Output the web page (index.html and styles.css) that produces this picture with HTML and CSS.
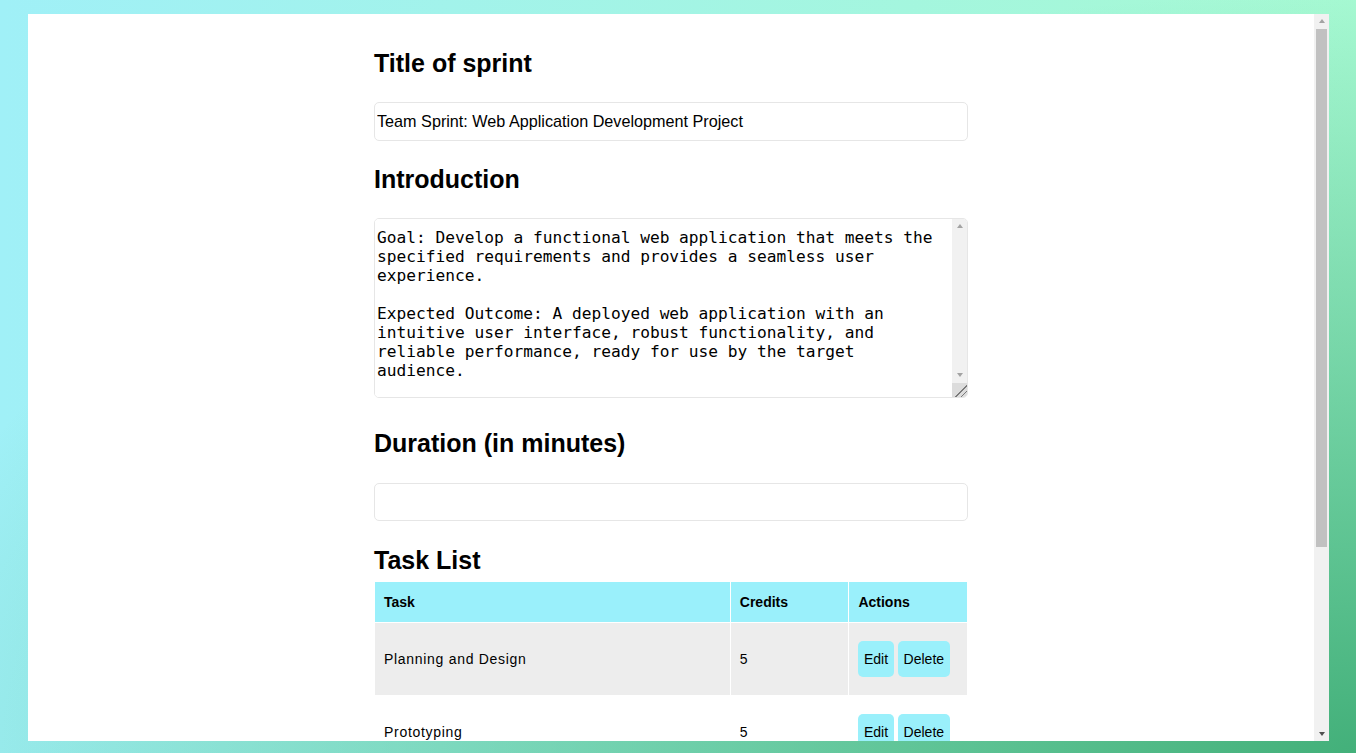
FILE: index.html
```html
<!DOCTYPE html>
<html lang="en">
<head>
<meta charset="utf-8">
<title>Sprint</title>
<link rel="stylesheet" href="styles.css">
</head>
<body>
<div class="panel">
  <div class="scroller">
    <div class="container">
      <h2>Title of sprint</h2>
      <input class="field" type="text" value="Team Sprint: Web Application Development Project">
      <h2>Introduction</h2>
      <div class="area-box">
        <textarea class="area">Goal: Develop a functional web application that meets the specified requirements and provides a seamless user experience.

Expected Outcome: A deployed web application with an intuitive user interface, robust functionality, and reliable performance, ready for use by the target audience.</textarea>
        <div class="vbar vbar-small">
          <div class="sb-btn up"></div>
          <div class="sb-track"></div>
          <div class="sb-btn down light"></div>
          <div class="sb-corner"></div>
        </div>
      </div>
      <h2 class="duration-title">Duration (in minutes)</h2>
      <input class="field" type="text" value="">
      <h2 class="list-title">Task List</h2>
      <table class="tasks">
        <thead>
          <tr><th class="c-task">Task</th><th class="c-credits">Credits</th><th class="c-actions">Actions</th></tr>
        </thead>
        <tbody>
          <tr><td>Planning and Design</td><td>5</td><td><button class="btn">Edit</button> <button class="btn">Delete</button></td></tr>
          <tr><td>Prototyping</td><td>5</td><td><button class="btn">Edit</button> <button class="btn">Delete</button></td></tr>
          <tr><td>Development</td><td>10</td><td><button class="btn">Edit</button> <button class="btn">Delete</button></td></tr>
          <tr><td>Testing</td><td>5</td><td><button class="btn">Edit</button> <button class="btn">Delete</button></td></tr>
          <tr><td>Deployment</td><td>3</td><td><button class="btn">Edit</button> <button class="btn">Delete</button></td></tr>
        </tbody>
      </table>
    </div>
  </div>
  <div class="vbar vbar-page">
    <div class="sb-btn up"></div>
    <div class="sb-track"><div class="sb-thumb"></div></div>
    <div class="sb-btn down"></div>
  </div>
</div>
</body>
</html>
```
FILE: styles.css
```css
html, body {
  margin: 0;
  padding: 0;
  height: 100%;
}
body {
  overflow: hidden;
  font-family: "Liberation Sans", Arial, sans-serif;
  color: #000;
  background:
    radial-gradient(ellipse 1500px 760px at 100% 100%, rgba(67,176,122,1) 0%, rgba(67,176,122,0) 100%),
    linear-gradient(90deg, #a0f0f7 0%, #a6f9d2 100%);
}
.panel {
  display: flex;
  margin: 14px 27px 0 28px;
  height: 727px;
  background: #fff;
}
.scroller {
  flex: 1;
  min-width: 0;
  overflow: hidden;
  padding: 10px 15px;
}
.container {
  width: 594px;
  margin: 0 auto;
}
h2 {
  font-size: 25px;
  font-weight: bold;
  margin: 24.6px 0;
}
.list-title {
  margin-bottom: 5.8px;
}
.field {
  display: block;
  box-sizing: border-box;
  width: 100%;
  height: 38.4px;
  margin: 0;
  padding: 0 2px;
  border: 1px solid #e6e6e6;
  border-radius: 5px;
  font-family: "Liberation Sans", Arial, sans-serif;
  font-size: 16.2px;
  color: #000;
  outline: none;
}
.area-box {
  display: flex;
  height: 180px;
  box-sizing: border-box;
  border: 1px solid #e6e6e6;
  border-radius: 5px;
  overflow: hidden;
  margin: -0.8px 0 31.4px;
}
.area {
  flex: 1;
  min-width: 0;
  box-sizing: border-box;
  margin: 0;
  padding: 9px 2px;
  border: none;
  font-family: "DejaVu Sans Mono", monospace;
  font-size: 16.2px;
  line-height: 19px;
  color: #000;
  overflow: hidden;
  resize: none;
  outline: none;
}

/* fake classic scrollbars */
.vbar {
  width: 15px;
  flex: 0 0 15px;
  background: #f1f1f1;
  display: flex;
  flex-direction: column;
}
.sb-btn {
  height: 15px;
  flex: 0 0 15px;
  display: flex;
  align-items: center;
  justify-content: center;
}
.sb-btn.up::before {
  content: "";
  width: 0;
  height: 0;
  border-left: 3.5px solid transparent;
  border-right: 3.5px solid transparent;
  border-bottom: 4px solid #a3a3a3;
  margin-top: -1px;
}
.sb-btn.down::before {
  content: "";
  width: 0;
  height: 0;
  border-left: 3.5px solid transparent;
  border-right: 3.5px solid transparent;
  border-top: 4px solid #505050;
}
.sb-btn.down.light::before {
  border-top-color: #a3a3a3;
}
.sb-track {
  flex: 1;
}
.sb-thumb {
  height: 518px;
  margin: 0 2px;
  background: #c1c1c1;
}
.sb-corner {
  height: 14px;
  flex: 0 0 14px;
  background-color: #dcdcdc;
  background-image: linear-gradient(135deg,
    transparent 58%, #7a7a7a 58%, #7a7a7a 64%, transparent 64%,
    transparent 76%, #7a7a7a 76%, #7a7a7a 82%, transparent 82%);
}

.tasks {
  width: 100%;
  border-collapse: collapse;
  font-size: 14px;
}
.tasks th,
.tasks td {
  border: 1px solid #fff;
  text-align: left;
}
.tasks th {
  background: #9af0fb;
  padding: 12px 9px;
  font-weight: bold;
}
.tasks td {
  padding: 18px 9px;
  letter-spacing: 0.7px;
}
.tasks tbody tr:nth-child(odd) td {
  background: #ededed;
}
.c-task { width: 60%; }
.c-credits { width: 20%; }
.c-actions { width: 20%; }
.btn {
  background: #9af0fb;
  border: none;
  border-radius: 5px;
  padding: 10px 5.5px;
  font-family: "Liberation Sans", Arial, sans-serif;
  font-size: 14px;
  color: #000;
  cursor: pointer;
}
```
